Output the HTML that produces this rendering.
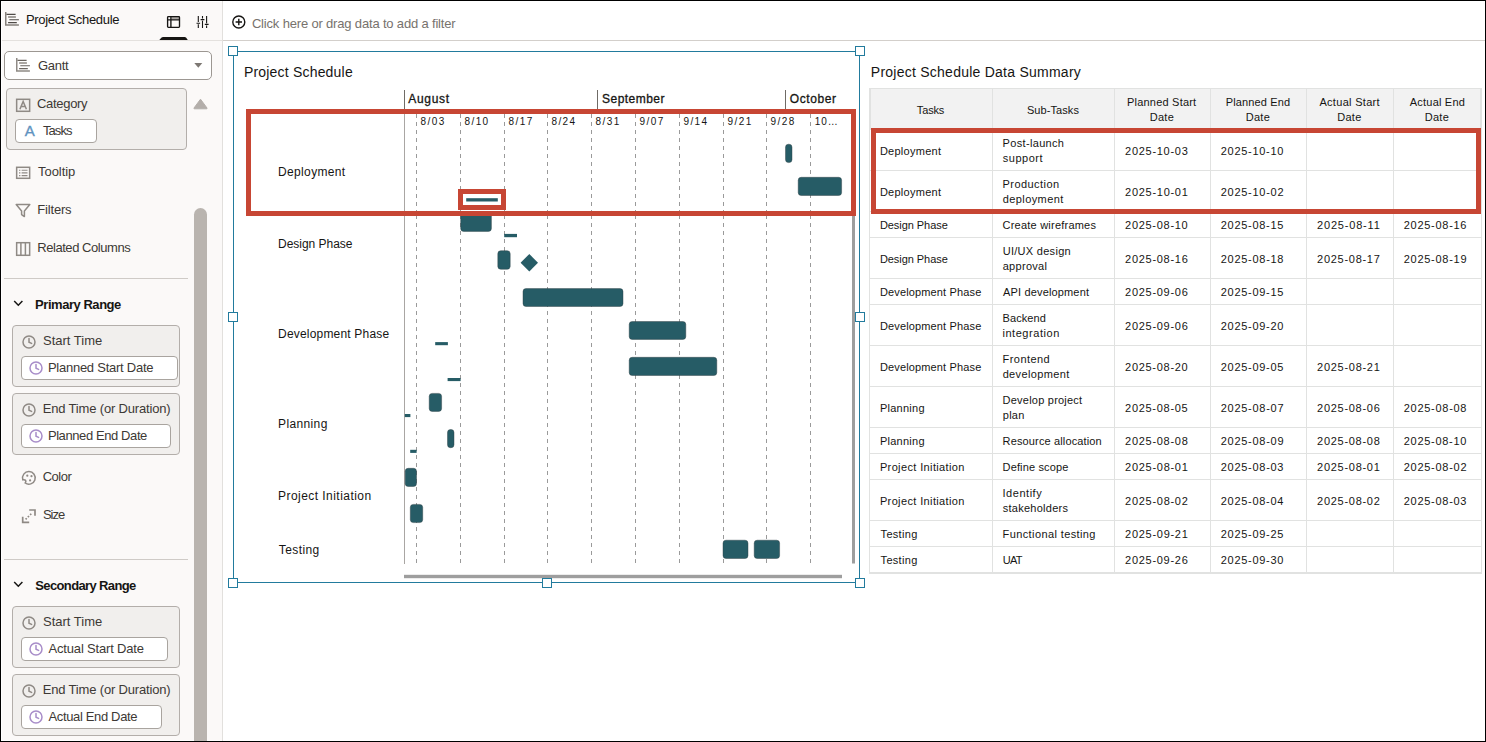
<!DOCTYPE html>
<html lang="en"><head><meta charset="utf-8"><title>Project Schedule</title>
<style>
html,body{margin:0;padding:0}
body{width:1486px;height:742px;overflow:hidden;position:relative;background:#fff;font-family:"Liberation Sans", sans-serif;color:#161513}
.t{position:absolute;white-space:pre;line-height:1;}
.a{position:absolute;box-sizing:border-box}
.grp{position:absolute;left:0;top:0;width:0;height:0;margin:0;padding:0}
svg{position:absolute;overflow:visible}

.box{position:absolute;box-sizing:border-box;background:#f1efed;border:1px solid #b3aeaa;border-radius:4px}
.chip{position:absolute;box-sizing:border-box;background:#fff;border:1px solid #a9a49f;border-radius:4px}
.hl{position:absolute;height:1px;background:#cfcbc7}
.h{position:absolute;box-sizing:border-box;width:10px;height:10px;background:#fff;border:1px solid #227b9d}

</style></head><body>
<aside class="grp" aria-label="Grammar panel">
<div class="a" style="left:2px;top:2px;width:221px;height:738px;background:#fbf9f8"></div>
<div class="a" style="left:222px;top:0;width:1px;height:742px;background:#e2e0dd"></div>
<div class="hl" style="left:2px;top:40px;width:220px;background:#e4e1de"></div>
<div class="hl" style="left:223px;top:40px;width:1263px;background:#d3cfcb"></div>
<svg style="left:0;top:0" width="223" height="41"><path d="M159.3 40 L161.6 37.6 Q162.2 37 163 37 L184.6 37 Q185.4 37 186 37.6 L187.8 40 Z" fill="#161513"/></svg>
<svg style="left:5px;top:11.9px" width="15" height="15" viewBox="0 0 15 15" fill="none"><path d="M0.75 0 V13.1 H13.9" stroke="#86817c" stroke-width="1.5"/><path d="M1.5 2.4 H10.6 M4.3 7.7 H13.9 M3.1 10.6 H11.8" stroke="#4f4b47" stroke-width="1.1"/><path d="M3.1 5 H10.9" stroke="#86817c" stroke-width="1.5"/></svg>
<svg style="left:166px;top:15px" width="16" height="14" viewBox="0 0 16 14" fill="none" stroke="#161513" stroke-width="1.35"><rect x="5.4" y="1.6" width="8" height="3" fill="#aaa6a2" stroke="none"/><rect x="1.6" y="1.6" width="11.9" height="10.7" rx="0.8"/><path d="M4.9 1.6 V12.3 M1.6 4.9 H13.5"/></svg>
<svg style="left:195px;top:15px" width="16" height="14" viewBox="0 0 16 14" fill="none" stroke="#161513" stroke-width="1.1"><path d="M3.3 1 V7 M3.3 9.3 V13 M1.5 8.2 H5.1 M7.5 1 V3.4 M7.5 5.8 V13 M5.6 4.6 H9.4 M11.6 1 V8.2 M11.6 10.6 V13 M9.8 9.4 H13.6"/></svg>
<div class="a" style="left:4px;top:51px;width:208px;height:29px;background:#fff;border:1px solid #9c9792;border-radius:5px"></div>
<svg style="left:16px;top:58px" width="15" height="15" viewBox="0 0 15 15" fill="none"><path d="M0.75 0 V13.1 H13.9" stroke="#8f8a85" stroke-width="1.5"/><path d="M1.5 2.4 H10.6 M4.3 7.7 H13.9 M3.1 10.6 H11.8" stroke="#6b6661" stroke-width="1.1"/><path d="M3.1 5 H10.9" stroke="#8f8a85" stroke-width="1.5"/></svg>
<svg style="left:194px;top:63px" width="9" height="5"><path d="M0.3 0 H8.3 L4.3 4.7 Z" fill="#7d7873"/></svg>
<div class="box" style="left:6px;top:88px;width:181px;height:62px"></div>
<svg style="left:16px;top:98px" width="15" height="15" fill="none" stroke="#8f8a85" stroke-width="1.5"><rect x="0.65" y="1.3" width="13" height="12"/><path d="M3.9 11.2 L7.15 3.4 L10.4 11.2 M5 8.6 H9.3" stroke-width="1.5"/></svg>
<div class="chip" style="left:15px;top:119px;width:82px;height:24px"></div>
<svg style="left:193px;top:98px" width="16" height="12"><path d="M7.5 1.2 L14 10 Q14.4 10.8 13.4 10.8 H1.6 Q0.6 10.8 1 10 Z" fill="#b3aeaa" stroke="#b3aeaa" stroke-width="1" stroke-linejoin="round"/></svg>
<svg style="left:16px;top:166px" width="15" height="14" fill="none" stroke="#8f8a85" stroke-width="1.5"><rect x="0.65" y="1.3" width="13" height="11"/><path d="M3 4.2 H4.4 M5.6 4.2 H11.5 M3 6.9 H4.4 M5.6 6.9 H11.5 M3 9.6 H4.4 M5.6 9.6 H11.5" stroke-width="1.1"/></svg>
<svg style="left:15px;top:203px" width="16" height="15" fill="none" stroke="#8f8a85" stroke-width="1.5" stroke-linejoin="round"><path d="M1.2 1.6 H14.8 L9.4 8 V13.6 L6.6 11.6 V8 Z"/></svg>
<svg style="left:16px;top:241px" width="15" height="16" fill="none" stroke="#8f8a85" stroke-width="1.5"><rect x="0.65" y="1.7" width="13" height="12.6"/><path d="M4.9 1.7 V14.3 M9.4 1.7 V14.3"/></svg>
<div class="a" style="left:194px;top:208px;width:13px;height:540px;background:#b9b4af;border-radius:6.5px 6.5px 0 0"></div>
<div class="hl" style="left:4px;top:278px;width:184px"></div>
<div class="hl" style="left:4px;top:559px;width:184px"></div>
<svg style="left:13px;top:300px" width="11" height="7" fill="none" stroke="#161513" stroke-width="1.5"><path d="M1.2 1 L5.3 5.2 L9.4 1"/></svg>
<div class="box" style="left:12px;top:325px;width:168px;height:62px"></div>
<svg style="left:20.7px;top:333.6px" width="16" height="16" fill="none" stroke="#8f8a85" stroke-width="1.5" stroke-linecap="round"><circle cx="8" cy="8" r="6"/><path d="M8 4.6 V8.2 L10.6 9.4"/></svg>
<div class="chip" style="left:21px;top:356px;width:157px;height:24px"></div>
<svg style="left:27.799999999999997px;top:360px" width="16" height="16" fill="none" stroke="#a88dc9" stroke-width="1.5" stroke-linecap="round"><circle cx="8" cy="8" r="6"/><path d="M8 4.6 V8.2 L10.6 9.4"/></svg>
<div class="box" style="left:12px;top:393px;width:168px;height:62px"></div>
<svg style="left:20.7px;top:401.6px" width="16" height="16" fill="none" stroke="#8f8a85" stroke-width="1.5" stroke-linecap="round"><circle cx="8" cy="8" r="6"/><path d="M8 4.6 V8.2 L10.6 9.4"/></svg>
<div class="chip" style="left:21px;top:424px;width:150px;height:24px"></div>
<svg style="left:27.799999999999997px;top:428px" width="16" height="16" fill="none" stroke="#a88dc9" stroke-width="1.5" stroke-linecap="round"><circle cx="8" cy="8" r="6"/><path d="M8 4.6 V8.2 L10.6 9.4"/></svg>
<svg style="left:13px;top:581px" width="11" height="7" fill="none" stroke="#161513" stroke-width="1.5"><path d="M1.2 1 L5.3 5.2 L9.4 1"/></svg>
<div class="box" style="left:12px;top:606px;width:168px;height:62px"></div>
<svg style="left:20.7px;top:614.6px" width="16" height="16" fill="none" stroke="#8f8a85" stroke-width="1.5" stroke-linecap="round"><circle cx="8" cy="8" r="6"/><path d="M8 4.6 V8.2 L10.6 9.4"/></svg>
<div class="chip" style="left:21px;top:637px;width:147px;height:24px"></div>
<svg style="left:27.799999999999997px;top:641px" width="16" height="16" fill="none" stroke="#a88dc9" stroke-width="1.5" stroke-linecap="round"><circle cx="8" cy="8" r="6"/><path d="M8 4.6 V8.2 L10.6 9.4"/></svg>
<div class="box" style="left:12px;top:674px;width:168px;height:62px"></div>
<svg style="left:20.7px;top:682.6px" width="16" height="16" fill="none" stroke="#8f8a85" stroke-width="1.5" stroke-linecap="round"><circle cx="8" cy="8" r="6"/><path d="M8 4.6 V8.2 L10.6 9.4"/></svg>
<div class="chip" style="left:21px;top:705px;width:141px;height:24px"></div>
<svg style="left:27.799999999999997px;top:709px" width="16" height="16" fill="none" stroke="#a88dc9" stroke-width="1.5" stroke-linecap="round"><circle cx="8" cy="8" r="6"/><path d="M8 4.6 V8.2 L10.6 9.4"/></svg>
<svg style="left:21px;top:470px" width="16" height="16" fill="none" stroke="#8f8a85" stroke-width="1.5"><path d="M8 1.6 A6.3 6.3 0 1 1 4.2 13 Q5.6 11 4 10 Q2.6 9.4 1.8 9.8 A6.3 6.3 0 0 1 8 1.6 Z"/><circle cx="6.3" cy="5.7" r="1.1" fill="#8f8a85" stroke="none"/><circle cx="10.5" cy="6.2" r="1.1" fill="#8f8a85" stroke="none"/><circle cx="9.1" cy="10.4" r="1.1" fill="#8f8a85" stroke="none"/></svg>
<svg style="left:21px;top:508px" width="16" height="16" fill="none" stroke="#8f8a85" stroke-width="1.7"><path d="M8.2 2 H14 V7.8 M1.7 8.7 V14.4 H8.2"/><path d="M4.6 11.4 L11.2 4.8" stroke-dasharray="1.6 1.6"/></svg>
<span class="t" style="left:25.88px;top:13.00px;font-size:13px;letter-spacing:-0.309px;">Project Schedule</span>
<span class="t" style="left:37.99px;top:59.00px;font-size:13px;color:#3d3935;letter-spacing:-0.308px;">Gantt</span>
<span class="t" style="left:36.99px;top:97.20px;font-size:13px;color:#3d3935;letter-spacing:-0.306px;">Category</span>
<span class="t" style="left:24.80px;top:122.80px;font-size:15px;color:#5f93c0;-webkit-text-stroke:0.35px #5f93c0;">A</span>
<span class="t" style="left:42.90px;top:124.00px;font-size:13px;color:#3d3935;letter-spacing:-0.880px;">Tasks</span>
<span class="t" style="left:38.10px;top:165.00px;font-size:13px;color:#3d3935;letter-spacing:-0.075px;">Tooltip</span>
<span class="t" style="left:37.28px;top:203.00px;font-size:13px;color:#3d3935;letter-spacing:-0.178px;">Filters</span>
<span class="t" style="left:37.28px;top:241.00px;font-size:13px;color:#3d3935;letter-spacing:-0.450px;">Related Columns</span>
<span class="t" style="left:35.09px;top:298.00px;font-size:13px;font-weight:700;letter-spacing:-0.460px;">Primary Range</span>
<span class="t" style="left:42.99px;top:334.00px;font-size:13px;color:#3d3935;">Start Time</span>
<span class="t" style="left:47.88px;top:361.00px;font-size:13px;color:#3d3935;letter-spacing:-0.247px;">Planned Start Date</span>
<span class="t" style="left:42.78px;top:402.00px;font-size:13px;color:#3d3935;letter-spacing:-0.173px;">End Time (or Duration)</span>
<span class="t" style="left:47.88px;top:429.00px;font-size:13px;color:#3d3935;letter-spacing:-0.405px;">Planned End Date</span>
<span class="t" style="left:35.30px;top:579.00px;font-size:13px;font-weight:700;letter-spacing:-0.628px;">Secondary Range</span>
<span class="t" style="left:42.99px;top:615.00px;font-size:13px;color:#3d3935;">Start Time</span>
<span class="t" style="left:48.50px;top:642.00px;font-size:13px;color:#3d3935;letter-spacing:-0.171px;">Actual Start Date</span>
<span class="t" style="left:42.78px;top:683.00px;font-size:13px;color:#3d3935;letter-spacing:-0.173px;">End Time (or Duration)</span>
<span class="t" style="left:48.50px;top:710.00px;font-size:13px;color:#3d3935;letter-spacing:-0.351px;">Actual End Date</span>
<span class="t" style="left:42.69px;top:469.80px;font-size:13px;color:#3d3935;letter-spacing:-0.473px;">Color</span>
<span class="t" style="left:42.89px;top:507.70px;font-size:13px;color:#3d3935;letter-spacing:-1.019px;">Size</span>
</aside>
<header class="grp" aria-label="Filter bar">
<svg style="left:231px;top:14px" width="16" height="16" fill="none" stroke="#161513" stroke-width="1.4"><circle cx="7.8" cy="8" r="6"/><path d="M7.8 4.8 V11.2 M4.6 8 H11"/></svg>
<span class="t" style="left:251.89px;top:16.80px;font-size:13px;color:#77726d;letter-spacing:-0.171px;">Click here or drag data to add a filter</span>
</header>
<section class="grp" aria-label="Project Schedule Gantt">
<div class="a" style="left:233px;top:51px;width:627px;height:532px;border:1px solid #227b9d"></div>
<svg style="left:0;top:0" width="1486" height="742"><path d="M404.5 90 V109 M597.5 90 V109 M785.5 90 V109" stroke="#6f6b66" stroke-width="1"/>
<path d="M404.5 109 V564" stroke="#a9a6a3" stroke-width="1"/>
<path shape-rendering="crispEdges" d="M416.5 114 V211 M460.5 114 V211 M504.5 114 V211 M547.5 114 V211 M591.5 114 V211 M635.5 114 V211 M679.5 114 V211 M723.5 114 V211 M766.5 114 V211 M810.5 114 V211" stroke="#9a9a9a" stroke-width="1" stroke-dasharray="4 4"/>
<path shape-rendering="crispEdges" d="M416.5 215 V563 M460.5 215 V563 M504.5 215 V563 M547.5 215 V563 M591.5 215 V563 M635.5 215 V563 M679.5 215 V563 M723.5 215 V563 M766.5 215 V563 M810.5 215 V563" stroke="#9a9a9a" stroke-width="1" stroke-dasharray="4 4"/>
<rect x="785.5" y="144.2" width="6.5" height="18.4" rx="3" fill="#265c66" stroke="#2f3f42" stroke-opacity="0.55" stroke-width="0.8"/>
<rect x="798.2" y="177.3" width="43.4" height="18.2" rx="3" fill="#265c66" stroke="#2f3f42" stroke-opacity="0.55" stroke-width="0.8"/>
<rect x="466.2" y="198.2" width="31.6" height="3.3" fill="#265c66"/>
<rect x="460.7" y="213.2" width="30.7" height="18.2" rx="3" fill="#265c66" stroke="#2f3f42" stroke-opacity="0.55" stroke-width="0.8"/>
<rect x="504.2" y="233.9" width="12.8" height="3.3" fill="#265c66"/>
<rect x="497.8" y="250.7" width="12.4" height="18.6" rx="3" fill="#265c66" stroke="#2f3f42" stroke-opacity="0.55" stroke-width="0.8"/>
<path d="M529.3 254.1 L538 262.8 L529.3 271.5 L520.6 262.8 Z" fill="#265c66"/>
<rect x="523.0" y="288.6" width="100.0" height="17.9" rx="3" fill="#265c66" stroke="#2f3f42" stroke-opacity="0.55" stroke-width="0.8"/>
<rect x="629.2" y="321.5" width="56.6" height="17.9" rx="3" fill="#265c66" stroke="#2f3f42" stroke-opacity="0.55" stroke-width="0.8"/>
<rect x="435.2" y="342.1" width="12.7" height="3.1" fill="#265c66"/>
<rect x="629.2" y="357.3" width="87.6" height="18.2" rx="3" fill="#265c66" stroke="#2f3f42" stroke-opacity="0.55" stroke-width="0.8"/>
<rect x="447.6" y="378.0" width="13.0" height="3.1" fill="#265c66"/>
<rect x="429.2" y="393.4" width="12.4" height="18.0" rx="3" fill="#265c66" stroke="#2f3f42" stroke-opacity="0.55" stroke-width="0.8"/>
<rect x="404.8" y="414.0" width="5.6" height="3.1" fill="#265c66"/>
<rect x="447.5" y="429.5" width="6.5" height="18.2" rx="3" fill="#265c66" stroke="#2f3f42" stroke-opacity="0.55" stroke-width="0.8"/>
<rect x="410.2" y="449.8" width="6.4" height="3.1" fill="#265c66"/>
<rect x="405.2" y="468.3" width="11.3" height="18.2" rx="3" fill="#265c66" stroke="#2f3f42" stroke-opacity="0.55" stroke-width="0.8"/>
<rect x="410.3" y="504.4" width="12.4" height="18.2" rx="3" fill="#265c66" stroke="#2f3f42" stroke-opacity="0.55" stroke-width="0.8"/>
<rect x="723.0" y="540.2" width="25.0" height="18.3" rx="3" fill="#265c66" stroke="#2f3f42" stroke-opacity="0.55" stroke-width="0.8"/>
<rect x="754.2" y="540.2" width="25.4" height="18.3" rx="3" fill="#265c66" stroke="#2f3f42" stroke-opacity="0.55" stroke-width="0.8"/>
<rect x="852" y="214" width="3" height="349.5" fill="#9e9e9e"/>
<rect x="404" y="574.8" width="438" height="3.4" fill="#9e9e9e"/>
<rect x="460.5" y="191.5" width="43" height="16" fill="none" stroke="#c74634" stroke-width="5"/>
<rect x="248.5" y="111.5" width="605" height="102" fill="none" stroke="#c74634" stroke-width="5"/></svg>
<div class="h" style="left:228px;top:46px"></div>
<div class="h" style="left:855px;top:46px"></div>
<div class="h" style="left:228px;top:578px"></div>
<div class="h" style="left:855px;top:578px"></div>
<div class="h" style="left:228px;top:312px"></div>
<div class="h" style="left:855px;top:312px"></div>
<div class="h" style="left:542px;top:578px"></div>
<span class="t" style="left:243.91px;top:65.00px;font-size:14px;letter-spacing:0.195px;">Project Schedule</span>
<span class="t" style="left:408.30px;top:92.80px;font-size:12px;color:#161513;-webkit-text-stroke:0.3px #161513;letter-spacing:0.665px;">August</span>
<span class="t" style="left:602.00px;top:92.80px;font-size:12px;color:#161513;-webkit-text-stroke:0.3px #161513;letter-spacing:0.475px;">September</span>
<span class="t" style="left:789.85px;top:92.80px;font-size:12px;color:#161513;-webkit-text-stroke:0.3px #161513;letter-spacing:0.593px;">October</span>
<span class="t" style="left:420.50px;top:116.80px;font-size:10px;letter-spacing:1.416px;">8/03</span>
<span class="t" style="left:464.50px;top:116.80px;font-size:10px;letter-spacing:1.400px;">8/10</span>
<span class="t" style="left:508.50px;top:116.80px;font-size:10px;letter-spacing:1.433px;">8/17</span>
<span class="t" style="left:551.50px;top:116.80px;font-size:10px;letter-spacing:1.366px;">8/24</span>
<span class="t" style="left:595.50px;top:116.80px;font-size:10px;letter-spacing:1.433px;">8/31</span>
<span class="t" style="left:639.45px;top:116.80px;font-size:10px;letter-spacing:1.450px;">9/07</span>
<span class="t" style="left:683.45px;top:116.80px;font-size:10px;letter-spacing:1.383px;">9/14</span>
<span class="t" style="left:727.45px;top:116.80px;font-size:10px;letter-spacing:1.450px;">9/21</span>
<span class="t" style="left:770.45px;top:116.80px;font-size:10px;letter-spacing:1.433px;">9/28</span>
<span class="t" style="left:814.75px;top:116.80px;font-size:10px;letter-spacing:0.988px;">10…</span>
<span class="t" style="left:278.05px;top:165.60px;font-size:12px;letter-spacing:0.345px;">Deployment</span>
<span class="t" style="left:278.05px;top:237.80px;font-size:12px;letter-spacing:-0.031px;">Design Phase</span>
<span class="t" style="left:278.05px;top:327.80px;font-size:12px;letter-spacing:0.188px;">Development Phase</span>
<span class="t" style="left:278.05px;top:417.80px;font-size:12px;letter-spacing:0.367px;">Planning</span>
<span class="t" style="left:278.05px;top:490.00px;font-size:12px;letter-spacing:0.450px;">Project Initiation</span>
<span class="t" style="left:278.75px;top:543.90px;font-size:12px;letter-spacing:0.409px;">Testing</span>
</section>
<section class="grp" aria-label="Project Schedule Data Summary">
<div class="a" style="left:869px;top:88px;width:613px;height:42px;background:#f2f2f2"></div>
<div class="a" style="left:869px;top:88px;width:613px;height:1px;background:#e1e2e1"></div>
<div class="a" style="left:869px;top:129px;width:613px;height:1px;background:#e1e2e1"></div>
<div class="a" style="left:869px;top:170px;width:613px;height:1px;background:#e1e2e1"></div>
<div class="a" style="left:869px;top:211px;width:613px;height:1px;background:#e1e2e1"></div>
<div class="a" style="left:869px;top:237px;width:613px;height:1px;background:#e1e2e1"></div>
<div class="a" style="left:869px;top:278px;width:613px;height:1px;background:#e1e2e1"></div>
<div class="a" style="left:869px;top:304px;width:613px;height:1px;background:#e1e2e1"></div>
<div class="a" style="left:869px;top:345px;width:613px;height:1px;background:#e1e2e1"></div>
<div class="a" style="left:869px;top:386px;width:613px;height:1px;background:#e1e2e1"></div>
<div class="a" style="left:869px;top:427px;width:613px;height:1px;background:#e1e2e1"></div>
<div class="a" style="left:869px;top:453px;width:613px;height:1px;background:#e1e2e1"></div>
<div class="a" style="left:869px;top:479px;width:613px;height:1px;background:#e1e2e1"></div>
<div class="a" style="left:869px;top:520px;width:613px;height:1px;background:#e1e2e1"></div>
<div class="a" style="left:869px;top:546px;width:613px;height:1px;background:#e1e2e1"></div>
<div class="a" style="left:869px;top:572px;width:613px;height:1px;background:#e1e2e1"></div>
<div class="a" style="left:869px;top:573px;width:613px;height:1px;background:#e1e2e1"></div>
<div class="a" style="left:869px;top:88px;width:1px;height:485px;background:#e1e2e1"></div>
<div class="a" style="left:992px;top:88px;width:1px;height:485px;background:#e1e2e1"></div>
<div class="a" style="left:1114px;top:88px;width:1px;height:485px;background:#e1e2e1"></div>
<div class="a" style="left:1210px;top:88px;width:1px;height:485px;background:#e1e2e1"></div>
<div class="a" style="left:1306px;top:88px;width:1px;height:485px;background:#e1e2e1"></div>
<div class="a" style="left:1393px;top:88px;width:1px;height:485px;background:#e1e2e1"></div>
<div class="a" style="left:1481px;top:88px;width:1px;height:485px;background:#e1e2e1"></div>
<div class="a" style="left:1480px;top:88px;width:1px;height:42px;background:#e1e2e1"></div>
<div class="a" style="left:870px;top:88px;width:1px;height:42px;background:#e1e2e1"></div>
<svg style="left:0;top:0" width="1486" height="742"><rect x="873.5" y="130.5" width="605" height="81" fill="none" stroke="#c74634" stroke-width="5"/></svg>
<span class="t" style="left:870.81px;top:65.10px;font-size:14px;letter-spacing:0.247px;">Project Schedule Data Summary</span>
<span class="t" style="left:916.85px;top:104.80px;font-size:11px;letter-spacing:-0.167px;">Tasks</span>
<span class="t" style="left:1026.95px;top:104.80px;font-size:11px;letter-spacing:0.081px;">Sub-Tasks</span>
<span class="t" style="left:1127.00px;top:97.20px;font-size:11px;letter-spacing:0.208px;">Planned Start</span>
<span class="t" style="left:1149.75px;top:112.00px;font-size:11px;letter-spacing:0.277px;">Date</span>
<span class="t" style="left:1225.70px;top:97.20px;font-size:11px;letter-spacing:0.137px;">Planned End</span>
<span class="t" style="left:1245.75px;top:112.00px;font-size:11px;letter-spacing:0.277px;">Date</span>
<span class="t" style="left:1319.45px;top:97.20px;font-size:11px;letter-spacing:0.300px;">Actual Start</span>
<span class="t" style="left:1337.25px;top:112.00px;font-size:11px;letter-spacing:0.277px;">Date</span>
<span class="t" style="left:1409.80px;top:97.20px;font-size:11px;letter-spacing:0.207px;">Actual End</span>
<span class="t" style="left:1424.75px;top:112.00px;font-size:11px;letter-spacing:0.277px;">Date</span>
<span class="t" style="left:879.90px;top:145.60px;font-size:11px;letter-spacing:0.262px;">Deployment</span>
<span class="t" style="left:1002.60px;top:137.60px;font-size:11px;letter-spacing:0.328px;">Post-launch</span>
<span class="t" style="left:1002.80px;top:152.50px;font-size:11px;letter-spacing:0.511px;">support</span>
<span class="t" style="left:1125.05px;top:145.60px;font-size:11px;letter-spacing:0.717px;">2025-10-03</span>
<span class="t" style="left:1220.75px;top:145.60px;font-size:11px;letter-spacing:0.711px;">2025-10-10</span>
<span class="t" style="left:879.90px;top:186.60px;font-size:11px;letter-spacing:0.262px;">Deployment</span>
<span class="t" style="left:1002.60px;top:178.60px;font-size:11px;letter-spacing:0.431px;">Production</span>
<span class="t" style="left:1002.65px;top:193.50px;font-size:11px;letter-spacing:0.426px;">deployment</span>
<span class="t" style="left:1125.05px;top:186.60px;font-size:11px;letter-spacing:0.722px;">2025-10-01</span>
<span class="t" style="left:1220.75px;top:186.60px;font-size:11px;letter-spacing:0.722px;">2025-10-02</span>
<span class="t" style="left:879.90px;top:219.60px;font-size:11px;letter-spacing:-0.056px;">Design Phase</span>
<span class="t" style="left:1002.55px;top:219.60px;font-size:11px;letter-spacing:0.221px;">Create wireframes</span>
<span class="t" style="left:1125.05px;top:219.60px;font-size:11px;letter-spacing:0.711px;">2025-08-10</span>
<span class="t" style="left:1220.75px;top:219.60px;font-size:11px;letter-spacing:0.711px;">2025-08-15</span>
<span class="t" style="left:1317.05px;top:219.60px;font-size:11px;letter-spacing:0.813px;">2025-08-11</span>
<span class="t" style="left:1403.75px;top:219.60px;font-size:11px;letter-spacing:0.717px;">2025-08-16</span>
<span class="t" style="left:879.90px;top:253.60px;font-size:11px;letter-spacing:-0.056px;">Design Phase</span>
<span class="t" style="left:1002.70px;top:245.60px;font-size:11px;letter-spacing:0.287px;">UI/UX design</span>
<span class="t" style="left:1002.65px;top:260.50px;font-size:11px;letter-spacing:0.307px;">approval</span>
<span class="t" style="left:1125.05px;top:253.60px;font-size:11px;letter-spacing:0.717px;">2025-08-16</span>
<span class="t" style="left:1220.75px;top:253.60px;font-size:11px;letter-spacing:0.717px;">2025-08-18</span>
<span class="t" style="left:1317.05px;top:253.60px;font-size:11px;letter-spacing:0.722px;">2025-08-17</span>
<span class="t" style="left:1403.75px;top:253.60px;font-size:11px;letter-spacing:0.722px;">2025-08-19</span>
<span class="t" style="left:879.90px;top:286.60px;font-size:11px;letter-spacing:0.144px;">Development Phase</span>
<span class="t" style="left:1003.10px;top:286.60px;font-size:11px;letter-spacing:0.149px;">API development</span>
<span class="t" style="left:1125.05px;top:286.60px;font-size:11px;letter-spacing:0.717px;">2025-09-06</span>
<span class="t" style="left:1220.75px;top:286.60px;font-size:11px;letter-spacing:0.711px;">2025-09-15</span>
<span class="t" style="left:879.90px;top:320.60px;font-size:11px;letter-spacing:0.144px;">Development Phase</span>
<span class="t" style="left:1002.60px;top:312.60px;font-size:11px;letter-spacing:0.077px;">Backend</span>
<span class="t" style="left:1002.40px;top:327.50px;font-size:11px;letter-spacing:0.560px;">integration</span>
<span class="t" style="left:1125.05px;top:320.60px;font-size:11px;letter-spacing:0.717px;">2025-09-06</span>
<span class="t" style="left:1220.75px;top:320.60px;font-size:11px;letter-spacing:0.711px;">2025-09-20</span>
<span class="t" style="left:879.90px;top:361.60px;font-size:11px;letter-spacing:0.144px;">Development Phase</span>
<span class="t" style="left:1002.60px;top:353.60px;font-size:11px;letter-spacing:0.434px;">Frontend</span>
<span class="t" style="left:1002.65px;top:368.50px;font-size:11px;letter-spacing:0.362px;">development</span>
<span class="t" style="left:1125.05px;top:361.60px;font-size:11px;letter-spacing:0.711px;">2025-08-20</span>
<span class="t" style="left:1220.75px;top:361.60px;font-size:11px;letter-spacing:0.711px;">2025-09-05</span>
<span class="t" style="left:1317.05px;top:361.60px;font-size:11px;letter-spacing:0.722px;">2025-08-21</span>
<span class="t" style="left:879.90px;top:402.60px;font-size:11px;letter-spacing:0.265px;">Planning</span>
<span class="t" style="left:1002.60px;top:394.60px;font-size:11px;letter-spacing:0.223px;">Develop project</span>
<span class="t" style="left:1002.80px;top:409.50px;font-size:11px;letter-spacing:0.224px;">plan</span>
<span class="t" style="left:1125.05px;top:402.60px;font-size:11px;letter-spacing:0.711px;">2025-08-05</span>
<span class="t" style="left:1220.75px;top:402.60px;font-size:11px;letter-spacing:0.722px;">2025-08-07</span>
<span class="t" style="left:1317.05px;top:402.60px;font-size:11px;letter-spacing:0.717px;">2025-08-06</span>
<span class="t" style="left:1403.75px;top:402.60px;font-size:11px;letter-spacing:0.717px;">2025-08-08</span>
<span class="t" style="left:879.90px;top:435.60px;font-size:11px;letter-spacing:0.265px;">Planning</span>
<span class="t" style="left:1002.60px;top:435.60px;font-size:11px;letter-spacing:0.137px;">Resource allocation</span>
<span class="t" style="left:1125.05px;top:435.60px;font-size:11px;letter-spacing:0.717px;">2025-08-08</span>
<span class="t" style="left:1220.75px;top:435.60px;font-size:11px;letter-spacing:0.722px;">2025-08-09</span>
<span class="t" style="left:1317.05px;top:435.60px;font-size:11px;letter-spacing:0.717px;">2025-08-08</span>
<span class="t" style="left:1403.75px;top:435.60px;font-size:11px;letter-spacing:0.711px;">2025-08-10</span>
<span class="t" style="left:879.90px;top:461.60px;font-size:11px;letter-spacing:0.371px;">Project Initiation</span>
<span class="t" style="left:1002.60px;top:461.60px;font-size:11px;letter-spacing:0.133px;">Define scope</span>
<span class="t" style="left:1125.05px;top:461.60px;font-size:11px;letter-spacing:0.722px;">2025-08-01</span>
<span class="t" style="left:1220.75px;top:461.60px;font-size:11px;letter-spacing:0.717px;">2025-08-03</span>
<span class="t" style="left:1317.05px;top:461.60px;font-size:11px;letter-spacing:0.722px;">2025-08-01</span>
<span class="t" style="left:1403.75px;top:461.60px;font-size:11px;letter-spacing:0.722px;">2025-08-02</span>
<span class="t" style="left:879.90px;top:495.60px;font-size:11px;letter-spacing:0.371px;">Project Initiation</span>
<span class="t" style="left:1002.50px;top:487.60px;font-size:11px;letter-spacing:0.534px;">Identify</span>
<span class="t" style="left:1002.80px;top:502.50px;font-size:11px;letter-spacing:0.253px;">stakeholders</span>
<span class="t" style="left:1125.05px;top:495.60px;font-size:11px;letter-spacing:0.722px;">2025-08-02</span>
<span class="t" style="left:1220.75px;top:495.60px;font-size:11px;letter-spacing:0.700px;">2025-08-04</span>
<span class="t" style="left:1317.05px;top:495.60px;font-size:11px;letter-spacing:0.722px;">2025-08-02</span>
<span class="t" style="left:1403.75px;top:495.60px;font-size:11px;letter-spacing:0.717px;">2025-08-03</span>
<span class="t" style="left:880.60px;top:528.60px;font-size:11px;letter-spacing:0.302px;">Testing</span>
<span class="t" style="left:1002.60px;top:528.60px;font-size:11px;letter-spacing:0.391px;">Functional testing</span>
<span class="t" style="left:1125.05px;top:528.60px;font-size:11px;letter-spacing:0.722px;">2025-09-21</span>
<span class="t" style="left:1220.75px;top:528.60px;font-size:11px;letter-spacing:0.711px;">2025-09-25</span>
<span class="t" style="left:880.60px;top:554.60px;font-size:11px;letter-spacing:0.302px;">Testing</span>
<span class="t" style="left:1002.70px;top:554.60px;font-size:11px;letter-spacing:-0.682px;">UAT</span>
<span class="t" style="left:1125.05px;top:554.60px;font-size:11px;letter-spacing:0.717px;">2025-09-26</span>
<span class="t" style="left:1220.75px;top:554.60px;font-size:11px;letter-spacing:0.711px;">2025-09-30</span>
</section>
<div class="grp">
<div class="a" style="left:0;top:0;width:1486px;height:742px;border:1px solid #000;z-index:9"></div>
</div>
</body></html>
